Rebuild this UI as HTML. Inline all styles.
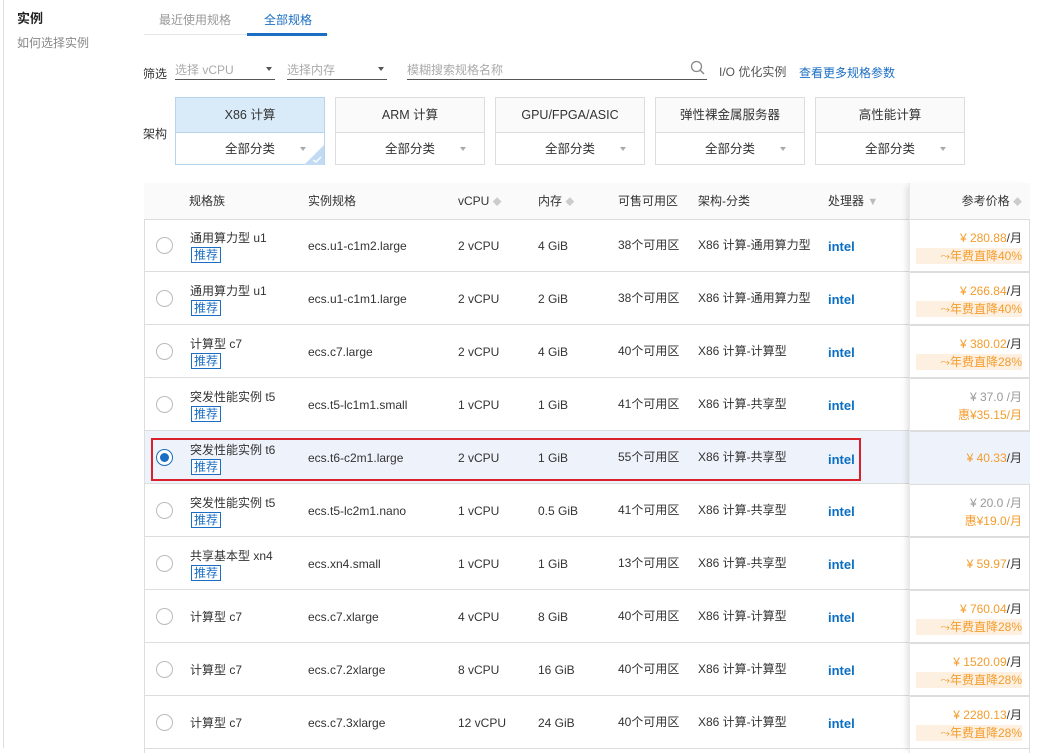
<!DOCTYPE html>
<html><head><meta charset="utf-8"><style>
*{margin:0;padding:0;box-sizing:border-box}
body{width:1047px;height:748px;overflow:hidden;background:#fff;font-family:"Liberation Sans","Noto Sans CJK SC",sans-serif;font-size:12px;color:#333;position:relative;line-height:16px}
.a{position:absolute;white-space:nowrap;line-height:16px}
.vl{position:absolute;left:3px;top:0;width:1px;height:748px;background:#ddd}
.sel{position:absolute;height:20px;border-bottom:1px solid #555;color:#aaa;font-size:12px;padding-top:2px}
.tri{position:absolute;width:0;height:0;border-left:3px solid transparent;border-right:3px solid transparent;border-top:4px solid #555}
.card{position:absolute;top:97px;width:150px;height:68px;border:1px solid #ddd}
.card .t{height:35px;border-bottom:1px solid #ddd;text-align:center;line-height:35px;font-size:12.5px;color:#333;background:#fafafa}
.card .b{height:32px;text-align:center;line-height:32px;font-size:12.5px;color:#333;position:relative}
.card .b i{position:absolute;right:18px;top:14px;border-left:3px solid transparent;border-right:3px solid transparent;border-top:4px solid #aaa}
.tbl{position:absolute;left:144px;top:183px;width:886px;height:570px;border-left:1px solid #ddd;border-top:1px solid #e5e5e5;border-right:1px solid #ddd}
.hd{position:absolute;left:144px;top:183px;width:886px;height:37px;background:#fafafa;border-bottom:1px solid #ddd}
.row{position:absolute;left:145px;width:884px;height:53px;border-bottom:1px solid #ddd}
.radio{position:absolute;left:11px;top:18px;width:17px;height:17px;border:1px solid #bbb;border-radius:50%;background:#fff}
.tag{position:absolute;left:46px;top:28px;border:1px solid #1b6ec2;color:#1b6ec2;font-size:12px;line-height:14px;padding:0 2px;background:#fff}
.intel{position:absolute;left:683px;font-weight:bold;color:#0a6fc4;font-size:13px;line-height:16px}
.pcol{position:absolute;left:909px;top:183px;width:121px;height:570px;box-shadow:-5px 0 6px -3px rgba(0,0,0,0.12);border-left:1px solid #e8e8e8}
.pr{position:absolute;right:8px;text-align:right;color:#f39c2c;line-height:16px;white-space:nowrap}
.pr b{font-weight:normal;color:#333}
.bad{position:absolute;right:8px;width:106px;height:16px;background:#fdf0e1;color:#f39c2c;text-align:right;line-height:16px;font-size:12px}
.g{color:#999}
</style></head><body>
<div class="vl"></div>
<div class="a" style="left:17px;top:11px;font-size:13px;font-weight:bold;color:#222">实例</div>
<div class="a" style="left:17px;top:35px;color:#888">如何选择实例</div>
<div class="a" style="left:144px;top:34px;width:184px;height:1px;background:#e5e5e5"></div>
<div class="a" style="left:159px;top:12px;color:#999">最近使用规格</div>
<div class="a" style="left:264px;top:12px;color:#1b6ec2">全部规格</div>
<div class="a" style="left:247px;top:33px;width:80px;height:3px;background:#1b6ec2"></div>

<div class="a" style="left:143px;top:66px;color:#333">筛选</div>
<div class="sel" style="left:175px;top:60px;width:100px">选择 vCPU</div><div class="tri" style="left:266px;top:67px"></div>
<div class="sel" style="left:287px;top:60px;width:100px">选择内存</div><div class="tri" style="left:378px;top:67px"></div>
<div class="sel" style="left:407px;top:60px;width:300px">模糊搜索规格名称</div>
<svg class="a" style="left:690px;top:60px" width="16" height="16"><circle cx="6.5" cy="6.5" r="5" fill="none" stroke="#888" stroke-width="1.3"/><line x1="10" y1="10" x2="14" y2="14" stroke="#888" stroke-width="1.4"/></svg>
<div class="a" style="left:719px;top:64px;color:#555">I/O 优化实例</div>
<div class="a" style="left:799px;top:65px;color:#1b6ec2">查看更多规格参数</div>

<div class="a" style="left:143px;top:126px">架构</div>
<div class="card" style="left:175px;border-color:#b8d3ec"><div class="t" style="background:#d9eaf8;border-color:#b8d3ec">X86 计算</div><div class="b">全部分类<i></i><svg style="position:absolute;right:0;bottom:0" width="20" height="20"><polygon points="20,0 20,20 0,20" fill="#c2dbf2"/><path d="M9 15 l3 2 l5 -5" stroke="#fff" fill="none" stroke-width="1.3"/></svg></div></div>
<div class="card" style="left:335px"><div class="t">ARM 计算</div><div class="b">全部分类<i></i></div></div>
<div class="card" style="left:495px"><div class="t">GPU/FPGA/ASIC</div><div class="b">全部分类<i></i></div></div>
<div class="card" style="left:655px"><div class="t">弹性裸金属服务器</div><div class="b">全部分类<i></i></div></div>
<div class="card" style="left:815px"><div class="t">高性能计算</div><div class="b">全部分类<i></i></div></div>

<div class="tbl"></div>
<div class="hd"></div>
<div class="a" style="left:189px;top:193px">规格族</div>
<div class="a" style="left:308px;top:193px">实例规格</div>
<div class="a" style="left:458px;top:193px">vCPU <span style="color:#ccc;font-size:9px">◆</span></div>
<div class="a" style="left:538px;top:193px">内存 <span style="color:#ccc;font-size:9px">◆</span></div>
<div class="a" style="left:618px;top:193px">可售可用区</div>
<div class="a" style="left:698px;top:193px">架构-分类</div>
<div class="a" style="left:828px;top:193px">处理器 <span style="color:#bbb;font-size:11px">▼</span></div>

<div class="row" style="top:219px"><div class="radio"></div><div class="a" style="left:45px;top:11px">通用算力型 u1</div><div class="tag">推荐</div><div class="a" style="left:163px;top:19px">ecs.u1-c1m2.large</div><div class="a" style="left:313px;top:19px">2 vCPU</div><div class="a" style="left:393px;top:19px">4 GiB</div><div class="a" style="left:473px;top:18px">38个可用区</div><div class="a" style="left:553px;top:18px">X86 计算-通用算力型</div><div class="intel" style="top:20px">intel</div></div>
<div class="row" style="top:272px"><div class="radio"></div><div class="a" style="left:45px;top:11px">通用算力型 u1</div><div class="tag">推荐</div><div class="a" style="left:163px;top:19px">ecs.u1-c1m1.large</div><div class="a" style="left:313px;top:19px">2 vCPU</div><div class="a" style="left:393px;top:19px">2 GiB</div><div class="a" style="left:473px;top:18px">38个可用区</div><div class="a" style="left:553px;top:18px">X86 计算-通用算力型</div><div class="intel" style="top:20px">intel</div></div>
<div class="row" style="top:325px"><div class="radio"></div><div class="a" style="left:45px;top:11px">计算型 c7</div><div class="tag">推荐</div><div class="a" style="left:163px;top:19px">ecs.c7.large</div><div class="a" style="left:313px;top:19px">2 vCPU</div><div class="a" style="left:393px;top:19px">4 GiB</div><div class="a" style="left:473px;top:18px">40个可用区</div><div class="a" style="left:553px;top:18px">X86 计算-计算型</div><div class="intel" style="top:20px">intel</div></div>
<div class="row" style="top:378px"><div class="radio"></div><div class="a" style="left:45px;top:11px">突发性能实例 t5</div><div class="tag">推荐</div><div class="a" style="left:163px;top:19px">ecs.t5-lc1m1.small</div><div class="a" style="left:313px;top:19px">1 vCPU</div><div class="a" style="left:393px;top:19px">1 GiB</div><div class="a" style="left:473px;top:18px">41个可用区</div><div class="a" style="left:553px;top:18px">X86 计算-共享型</div><div class="intel" style="top:20px">intel</div></div>
<div class="row" style="top:431px;background:#eef2fa"><div class="radio" style="border-color:#1b6ec2"><div style="position:absolute;left:3px;top:3px;width:9px;height:9px;border-radius:50%;background:#1b6ec2"></div></div><div class="a" style="left:45px;top:11px">突发性能实例 t6</div><div class="tag">推荐</div><div class="a" style="left:163px;top:19px">ecs.t6-c2m1.large</div><div class="a" style="left:313px;top:19px">2 vCPU</div><div class="a" style="left:393px;top:19px">1 GiB</div><div class="a" style="left:473px;top:18px">55个可用区</div><div class="a" style="left:553px;top:18px">X86 计算-共享型</div><div class="intel" style="top:21px">intel</div></div>
<div class="row" style="top:484px"><div class="radio"></div><div class="a" style="left:45px;top:11px">突发性能实例 t5</div><div class="tag">推荐</div><div class="a" style="left:163px;top:19px">ecs.t5-lc2m1.nano</div><div class="a" style="left:313px;top:19px">1 vCPU</div><div class="a" style="left:393px;top:19px">0.5 GiB</div><div class="a" style="left:473px;top:18px">41个可用区</div><div class="a" style="left:553px;top:18px">X86 计算-共享型</div><div class="intel" style="top:20px">intel</div></div>
<div class="row" style="top:537px"><div class="radio"></div><div class="a" style="left:45px;top:11px">共享基本型 xn4</div><div class="tag">推荐</div><div class="a" style="left:163px;top:19px">ecs.xn4.small</div><div class="a" style="left:313px;top:19px">1 vCPU</div><div class="a" style="left:393px;top:19px">1 GiB</div><div class="a" style="left:473px;top:18px">13个可用区</div><div class="a" style="left:553px;top:18px">X86 计算-共享型</div><div class="intel" style="top:20px">intel</div></div>
<div class="row" style="top:590px"><div class="radio"></div><div class="a" style="left:45px;top:19px">计算型 c7</div><div class="a" style="left:163px;top:19px">ecs.c7.xlarge</div><div class="a" style="left:313px;top:19px">4 vCPU</div><div class="a" style="left:393px;top:19px">8 GiB</div><div class="a" style="left:473px;top:18px">40个可用区</div><div class="a" style="left:553px;top:18px">X86 计算-计算型</div><div class="intel" style="top:20px">intel</div></div>
<div class="row" style="top:643px"><div class="radio"></div><div class="a" style="left:45px;top:19px">计算型 c7</div><div class="a" style="left:163px;top:19px">ecs.c7.2xlarge</div><div class="a" style="left:313px;top:19px">8 vCPU</div><div class="a" style="left:393px;top:19px">16 GiB</div><div class="a" style="left:473px;top:18px">40个可用区</div><div class="a" style="left:553px;top:18px">X86 计算-计算型</div><div class="intel" style="top:20px">intel</div></div>
<div class="row" style="top:696px"><div class="radio"></div><div class="a" style="left:45px;top:19px">计算型 c7</div><div class="a" style="left:163px;top:19px">ecs.c7.3xlarge</div><div class="a" style="left:313px;top:19px">12 vCPU</div><div class="a" style="left:393px;top:19px">24 GiB</div><div class="a" style="left:473px;top:18px">40个可用区</div><div class="a" style="left:553px;top:18px">X86 计算-计算型</div><div class="intel" style="top:20px">intel</div></div>

<div class="pcol">
<div style="position:absolute;left:0;top:0;width:120px;height:37px;background:#fafafa;border-bottom:1px solid #ddd"></div>
<div class="pr" style="top:10px;color:#333">参考价格 <span style="color:#ccc;font-size:9px">◆</span></div>
<div class="pr" style="top:47px">¥ 280.88<b>/月</b></div><div class="bad" style="top:65px">⤳年费直降40%</div>
<div class="pr" style="top:100px">¥ 266.84<b>/月</b></div><div class="bad" style="top:118px">⤳年费直降40%</div>
<div class="pr" style="top:153px">¥ 380.02<b>/月</b></div><div class="bad" style="top:171px">⤳年费直降28%</div>
<div class="pr g" style="top:206px;color:#999">¥ 37.0 /月</div><div class="pr" style="top:224px">惠¥35.15/月</div>
<div style="position:absolute;left:0;top:249px;width:120px;height:52px;background:#eef2fa"></div>
<div class="pr" style="top:267px">¥ 40.33<b>/月</b></div>
<div class="pr g" style="top:312px;color:#999">¥ 20.0 /月</div><div class="pr" style="top:330px">惠¥19.0/月</div>
<div class="pr" style="top:373px">¥ 59.97<b>/月</b></div>
<div class="pr" style="top:418px">¥ 760.04<b>/月</b></div><div class="bad" style="top:436px">⤳年费直降28%</div>
<div class="pr" style="top:471px">¥ 1520.09<b>/月</b></div><div class="bad" style="top:489px">⤳年费直降28%</div>
<div class="pr" style="top:524px">¥ 2280.13<b>/月</b></div><div class="bad" style="top:542px">⤳年费直降28%</div>
<div style="position:absolute;left:0;top:89px;width:120px;height:1px;background:#ddd"></div>
<div style="position:absolute;left:0;top:142px;width:120px;height:1px;background:#ddd"></div>
<div style="position:absolute;left:0;top:195px;width:120px;height:1px;background:#ddd"></div>
<div style="position:absolute;left:0;top:248px;width:120px;height:1px;background:#ddd"></div>
<div style="position:absolute;left:0;top:301px;width:120px;height:1px;background:#ddd"></div>
<div style="position:absolute;left:0;top:354px;width:120px;height:1px;background:#ddd"></div>
<div style="position:absolute;left:0;top:407px;width:120px;height:1px;background:#ddd"></div>
<div style="position:absolute;left:0;top:460px;width:120px;height:1px;background:#ddd"></div>
<div style="position:absolute;left:0;top:513px;width:120px;height:1px;background:#ddd"></div>
</div>

<div class="a" style="left:151px;top:438px;width:710px;height:43px;border:2px solid #d9212c"></div>
</body></html>
